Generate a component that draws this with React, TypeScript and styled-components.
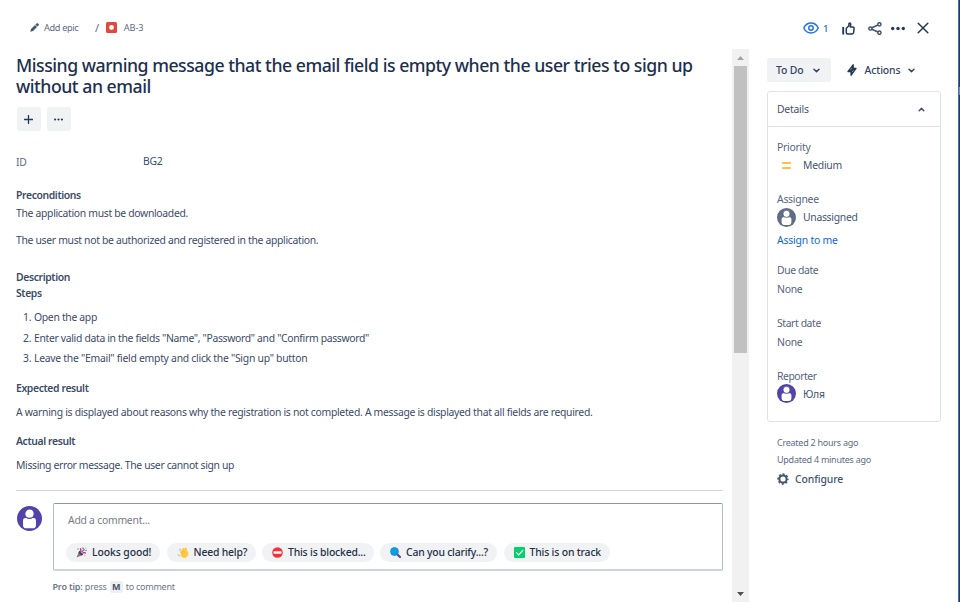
import React from 'react';
import styled, { createGlobalStyle } from 'styled-components';

const GlobalStyle = createGlobalStyle`
  * { box-sizing: border-box; }
  body { margin: 0; background: #fff; font: 10.4px "Noto Sans", "Open Sans", sans-serif; color: #3b4b68; overflow: hidden; }
  h1, p, ol, button { margin: 0; padding: 0; font: inherit; }
  svg { display: block; flex: none; }
`;

const Page = styled.div`
  display: grid;
  grid-template-columns: 749px 209px 2px;
  width: 960px;
  height: 602px;
  overflow: hidden;
`;
const Issue = styled.div`
  display: grid;
  grid-template-rows: 49px 553px;
`;
const Body = styled.div`
  display: grid;
  grid-template-columns: 732px 17px;
`;
const Edge = styled.div`
  display: flex;
  align-items: flex-start;
  padding-top: 87px;
  background: #0b3f86;
  border-left: 1px solid #4a6fa8;
`;
const EdgeMark = styled.i`
  width: 1px;
  height: 8px;
  background: #6d8fc0;
`;

const Text = styled.span<{ $size?: number; $weight?: number; $ls?: number; $color?: string }>`
  font-size: ${(p) => p.$size ?? 10.4}px;
  font-weight: ${(p) => p.$weight ?? 400};
  letter-spacing: ${(p) => p.$ls ?? -0.25}px;
  color: ${(p) => p.$color ?? 'inherit'};
  white-space: pre;
`;
const Copy = styled(Text)`
  letter-spacing: ${(p) => p.$ls ?? -0.32}px;
`;
const Strong = styled(Text)`
  font-weight: 600;
  letter-spacing: -0.38px;
`;

const Breadcrumbs = styled.nav`
  display: flex;
  align-items: center;
  height: 55px;
  padding-left: 30px;
  color: #5e6c84;
`;
const EpicLink = styled.span`
  display: flex;
  align-items: center;
  gap: 5px;
  width: 65px;
`;
const Key = styled.span`
  display: flex;
  align-items: center;
  gap: 7px;
  margin-left: 7px;
`;

const Content = styled.main`
  display: flex;
  flex-direction: column;
  padding: 6px 9px 0 16px;
`;
const Title = styled.h1`
  height: 42px;
  font-size: 17.7px;
  font-weight: 500;
  line-height: 21px;
  letter-spacing: -0.49px;
  white-space: pre;
  color: #1c3050;
`;
const Tools = styled.div`
  display: flex;
  gap: 6px;
  margin: 10px 0 0 0.5px;
`;
const ToolButton = styled.button`
  display: grid;
  place-items: center;
  width: 24px;
  height: 24px;
  border: 0;
  border-radius: 3px;
  background: #f1f2f4;
  color: #253858;
`;
const FieldRow = styled.div`
  display: flex;
  height: 16px;
  margin: 22px 0 18px;
  line-height: 16px;
`;
const FieldName = styled.div`
  width: 127px;
  padding-top: 1px;
`;
const Line = styled.p<{ $gap?: number }>`
  height: 16px;
  line-height: 16px;
  margin-top: ${(p) => p.$gap ?? 0}px;
  display: flex;
`;
const Steps = styled.ol`
  list-style: none;
  display: flex;
  flex-direction: column;
  gap: 4.7px;
  margin-top: 8px;
`;
const Step = styled.li`
  display: flex;
  height: 16px;
  line-height: 16px;
`;
const StepNumber = styled.span`
  width: 18px;
  padding-left: 7px;
`;
const Divider = styled.hr`
  width: 707px;
  height: 1px;
  margin: 17px 0 0;
  border: 0;
  background: #d3d6dd;
`;
const CommentRow = styled.section`
  display: flex;
  gap: 11px;
  margin: 12px 0 0 1px;
`;
const AvatarSlot = styled.div`
  padding-top: 3px;
`;
const CommentBox = styled.div`
  width: 670px;
  height: 68px;
  padding: 8px 12px;
  border: 1px solid #b3b9c7;
  border-top-color: #8c95a4;
  border-bottom: 2px solid #ced2dc;
  border-radius: 2px;
`;
const Placeholder = styled.div`
  height: 16px;
  padding-left: 2px;
  line-height: 16px;
  color: #757c88;
`;
const Chips = styled.div`
  display: flex;
  gap: 6.5px;
  margin-top: 15px;
`;
const Chip = styled.button<{ $w: number }>`
  display: flex;
  align-items: center;
  width: ${(p) => p.$w}px;
  height: 19px;
  padding-left: 10px;
  gap: 5px;
  border: 0;
  border-radius: 10px;
  background: #f1f2f4;
  color: #253048;
`;
const Tip = styled.footer`
  display: flex;
  align-items: center;
  height: 16px;
  margin: 8px 0 0 36.5px;
  color: #6b778c;
`;
const KeyCap = styled.kbd`
  display: grid;
  place-items: center;
  width: 13px;
  height: 12px;
  margin: 1px 3px 0;
  border-radius: 2px;
  background: #eeeff1;
  font-family: inherit;
  line-height: 12px;
`;

const Track = styled.div`
  display: flex;
  flex-direction: column;
  align-items: center;
  background: #f1f1f1;
`;
const Arrow = styled.div`
  display: grid;
  place-items: center;
  height: 17px;
  flex: none;
`;
const Thumb = styled.div`
  width: 13px;
  height: 287px;
  background: #c1c1c1;
`;
const Spacer = styled.div`
  flex: 1;
`;

const Side = styled.aside`
  display: flex;
  flex-direction: column;
  padding: 17px 17px 0 18px;
`;
const TopActions = styled.div`
  display: flex;
  align-items: center;
  height: 22px;
  padding-left: 36px;
  color: #253858;
`;
const Watch = styled.span`
  display: flex;
  align-items: center;
  gap: 4px;
  width: 39px;
  color: #2573de;
`;
const IconCell = styled.span<{ $w: number }>`
  display: flex;
  width: ${(p) => p.$w}px;
`;
const StatusRow = styled.div`
  display: flex;
  margin-top: 19px;
  height: 24px;
`;
const StatusButton = styled.button`
  display: flex;
  align-items: center;
  justify-content: space-between;
  width: 64px;
  padding: 0 11px 0 9px;
  border: 0;
  border-radius: 2px;
  background: #f1f2f4;
  color: #344563;
`;
const ActionsButton = styled(StatusButton)`
  width: 69px;
  margin-left: 16px;
  padding: 0 1px 0 0;
  background: none;
`;
const Panel = styled.section`
  width: 174px;
  height: 331px;
  margin-top: 9px;
  border: 1px solid #e0e2e7;
  border-radius: 3px;
`;
const PanelHead = styled.header`
  display: flex;
  align-items: center;
  justify-content: space-between;
  height: 35px;
  padding: 0 15px 0 9px;
  border-bottom: 1px solid #e0e2e7;
  color: #44546f;
`;
const Fields = styled.div`
  padding: 12px 0 0 9px;
`;
const Field = styled.div<{ $h: number; $gap?: number }>`
  display: flex;
  flex-direction: column;
  gap: ${(p) => p.$gap ?? 3}px;
  height: ${(p) => p.$h}px;
  line-height: 16px;
  color: #56647e;
`;
const Value = styled.div`
  display: flex;
  align-items: center;
  gap: 7px;
  height: 16px;
  color: #44546f;
`;
const Symbol = styled.span`
  display: grid;
  place-items: center;
  width: 19px;
  flex: none;
`;
const Meta = styled.div`
  display: flex;
  flex-direction: column;
  padding: 12px 0 0 10px;
  line-height: 17px;
  color: #5e6c84;
`;
const Configure = styled.div`
  display: flex;
  align-items: center;
  gap: 6px;
  height: 18px;
  margin-top: 2px;
  color: #44546f;
`;

const Avatar = ({ size, color }: { size: number; color: string }) => (
  <svg width={size} height={size} viewBox="0 0 24 24">
    <circle cx="12" cy="12" r="12" fill={color} />
    <path d="M8 11.600h8a2.200 2.200 0 0 1 2.200 2.200v4.600a3 3 0 0 1-3 3H8.800a3 3 0 0 1-3-3v-4.600A2.200 2.200 0 0 1 8 11.600z" fill="#fff" />
    <circle cx="12" cy="7.400" r="4.500" fill="#fff" stroke={color} strokeWidth="1.100" />
  </svg>
);
const Chevron = ({ up }: { up?: boolean }) => (
  <svg width="7" height="5" viewBox="0 0 7 5" fill="none" stroke="currentColor" strokeWidth="1.5" strokeLinecap="round" strokeLinejoin="round">
    <path d={up ? 'M1.200 3.700 3.500 1.400 5.800 3.700' : 'M1 1.200 3.500 3.600 6 1.200'} />
  </svg>
);
const Pencil = () => (
  <svg width="9" height="9" viewBox="0 0 9 9" fill="#44546f">
    <path d="M.3 8.700 1 6 5 2 7 4 3 8zM5.400 1.600 6.600.4a1 1 0 0 1 1.300 0l.7.7a1 1 0 0 1 0 1.300L7.400 3.600z" />
  </svg>
);
const Bug = () => (
  <svg width="11" height="11" viewBox="0 0 11 11">
    <rect width="11" height="11" rx="1.500" fill="#e5483a" />
    <circle cx="5.500" cy="5.500" r="2.400" fill="#fff" />
  </svg>
);
const Dots = ({ w, r }: { w: number; r: number }) => (
  <svg width={w} height="5" viewBox={`0 0 ${w} 5`} fill="currentColor">
    <circle cx={r} cy="2.500" r={r} />
    <circle cx={w / 2} cy="2.500" r={r} />
    <circle cx={w - r} cy="2.500" r={r} />
  </svg>
);
const Eye = () => (
  <svg width="16" height="12" viewBox="0 0 16 12" fill="none" stroke="currentColor" strokeWidth="1.500">
    <path d="M.8 6C2.300 2.800 4.800 1 8 1s5.700 1.800 7.200 5C13.700 9.200 11.200 11 8 11S2.300 9.200.8 6z" />
    <circle cx="8" cy="6" r="2.200" />
  </svg>
);
const Thumbs = () => (
  <svg width="13" height="13" viewBox="0 0 13 13" fill="none" stroke="currentColor" strokeWidth="1.500" strokeLinejoin="round">
    <path d="M4.300 6.300 6.900 3.700V1.800C6.900.9 8.700.6 8.700 2.300c0 1.200-.4 2.300-.4 2.800h2.600c.9 0 1.300.6 1.200 1.400l-.5 4c-.1.8-.6 1.400-1.400 1.400H5.800c-1 0-1.500-.6-1.500-1.500z" />
    <path d="M1.200 5.800v6" strokeWidth="1.900" strokeLinecap="round" />
  </svg>
);
const Share = () => (
  <svg width="14" height="13" viewBox="0 0 14 13" fill="none" stroke="#44546f" strokeWidth="1.500">
    <circle cx="2.400" cy="6.500" r="1.600" />
    <circle cx="11.400" cy="2.300" r="1.600" />
    <circle cx="11.400" cy="10.700" r="1.600" />
    <path d="M3.900 5.800 9.900 3M3.900 7.200l6 2.800" />
  </svg>
);
const Close = () => (
  <svg width="12" height="12" viewBox="0 0 12 12" fill="none" stroke="currentColor" strokeWidth="1.500" strokeLinecap="round">
    <path d="M1.200 1.200 10.800 10.800M10.800 1.200 1.200 10.800" />
  </svg>
);
const Bolt = () => (
  <svg width="10" height="12" viewBox="0 0 10 12">
    <path d="M6.200.7v3.700h2.900L4 11.300V7.600H.9z" fill="#253858" stroke="#253858" strokeWidth="1.200" strokeLinejoin="round" />
    <path d="M4.700 4.300 3.600 5.700M6.400 6.300 5.300 7.700" stroke="#fff" strokeWidth=".6" />
  </svg>
);
const Plus = () => (
  <svg width="9" height="9" viewBox="0 0 9 9" stroke="currentColor" strokeWidth="1.300" strokeLinecap="round">
    <path d="M4.500.5v8M.5 4.500h8" />
  </svg>
);
const Gear = () => (
  <svg width="12" height="12" viewBox="0 0 12 12" fill="none" stroke="#44546f">
    <circle cx="6" cy="6" r="3.600" strokeWidth="2" />
    <circle cx="6" cy="6" r="4.900" strokeWidth="1.500" strokeDasharray="2.200 1.648" strokeDashoffset="1.1" />
  </svg>
);

const Party = () => (
  <svg width="11" height="11" viewBox="0 0 11 11">
    <path d="M.6 10.500 3.300 3.800 7.200 7.800z" fill="#8f7462" />
    <path d="m3.300 3.800 3.900 4-1.700.8L2.500 5.700z" fill="#4a4050" />
    <path d="M4.200 4.700C5.400 3.900 5 2.500 4.200 1.400M6.300 6.500c1-1 2.500-.9 3.600-.2" stroke="#d81b72" strokeWidth="1.300" fill="none" />
    <path d="M5.400 5.200 8.600 2.200" stroke="#00a4dc" strokeWidth="1.300" />
    <circle cx="7" cy="1.200" r=".8" fill="#d81b72" />
    <circle cx="10" cy="3.500" r=".8" fill="#ee4f91" />
    <circle cx="2" cy="2" r=".7" fill="#3b92d1" />
    <circle cx="9.700" cy="1" r=".6" fill="#8fc6ee" />
    <circle cx="8.700" cy="8.800" r=".7" fill="#ffa4bd" />
  </svg>
);
const Wave = () => (
  <svg width="12" height="11" viewBox="0 0 12 11">
    <path d="M3.200 4.600 5 3.200 6 1.300l1.300.9L8.500.7l1.100 1.100.1 2 1.300 1.700-.3 3.300-2 1.600-2.600.2-2.700-2.300 1-.9z" fill="#ffc83d" stroke="#ffc83d" strokeWidth=".7" strokeLinejoin="round" />
    <path d="m4.800 5.300 1.800 1.900M6.200 3.900l1.600 1.700" stroke="#e6a400" strokeWidth=".5" />
    <path d="M2.200 3.600c.3-.9.900-1.500 1.700-1.900M1 7.200c.2 1 .8 1.700 1.800 2" stroke="#a3c9ee" strokeWidth="1.200" fill="none" />
  </svg>
);
const Blocked = () => (
  <svg width="11" height="11" viewBox="0 0 11 11">
    <circle cx="5.500" cy="5.500" r="5.300" fill="#f92f36" />
    <rect x="1.500" y="4.300" width="8" height="2.400" rx=".5" fill="#fff" />
  </svg>
);
const Magnifier = () => (
  <svg width="11" height="11" viewBox="0 0 11 11">
    <path d="m7 7 3 3" stroke="#654a88" strokeWidth="2.200" strokeLinecap="round" />
    <circle cx="4.500" cy="4.500" r="3.900" fill="#00a6ed" stroke="#3a76b8" strokeWidth=".9" />
  </svg>
);
const Check = () => (
  <svg width="11" height="11" viewBox="0 0 11 11">
    <rect width="11" height="11" rx="1" fill="#00d26a" />
    <path d="m2.500 5.600 2.200 2.200 4-4.300" fill="none" stroke="#fff" strokeWidth="1.200" strokeLinecap="round" />
  </svg>
);

const chips = [
  { label: 'Looks good!', icon: <Party />, width: 94, ls: -0.08 },
  { label: 'Need help?', icon: <Wave />, width: 89, ls: -0.18 },
  { label: 'This is blocked...', icon: <Blocked />, width: 111.5, ls: -0.18 },
  { label: 'Can you clarify...?', icon: <Magnifier />, width: 117, ls: -0.2 },
  { label: 'This is on track', icon: <Check />, width: 106, ls: -0.16 },
];
const steps = [
  { text: 'Open the app', ls: -0.32 },
  { text: 'Enter valid data in the fields "Name", "Password" and "Confirm password"', ls: -0.33 },
  { text: 'Leave the "Email" field empty and click the "Sign up" button', ls: -0.27 },
];

export default function App() {
  return (
    <>
      <GlobalStyle />
      <Page>
        <Issue>
          <Breadcrumbs>
            <EpicLink><Pencil /><Text $size={9.2} $ls={-0.35}>Add epic</Text></EpicLink>
            <Text $size={11}>/</Text>
            <Key><Bug /><Text $size={9.2} $ls={-0.15}>AB-3</Text></Key>
          </Breadcrumbs>
          <Body>
            <Content>
              <Title>{'Missing warning message that the email field is empty when the user tries to sign up\nwithout an email'}</Title>
              <Tools>
                <ToolButton aria-label="Add"><Plus /></ToolButton>
                <ToolButton aria-label="More"><Dots w={9} r={1.1} /></ToolButton>
              </Tools>
              <FieldRow>
                <FieldName><Text $color="#5e6c84">ID</Text></FieldName>
                <Text>BG2</Text>
              </FieldRow>
              <Line><Strong>Preconditions</Strong></Line>
              <Line $gap={2}><Copy>The application must be downloaded.</Copy></Line>
              <Line $gap={11}><Copy>The user must not be authorized and registered in the application.</Copy></Line>
              <Line $gap={21}><Strong>Description</Strong></Line>
              <Line><Strong>Steps</Strong></Line>
              <Steps>
                {steps.map((s, i) => (
                  <Step key={s.text}><StepNumber><Text>{i + 1}.</Text></StepNumber><Copy $ls={s.ls}>{s.text}</Copy></Step>
                ))}
              </Steps>
              <Line $gap={13.6}><Strong>Expected result</Strong></Line>
              <Line $gap={8}><Copy $ls={-0.305}>A warning is displayed about reasons why the registration is not completed. A message is displayed that all fields are required.</Copy></Line>
              <Line $gap={13}><Strong>Actual result</Strong></Line>
              <Line $gap={8}><Copy $ls={-0.35}>Missing error message. The user cannot sign up</Copy></Line>
              <Divider />
              <CommentRow>
                <AvatarSlot><Avatar size={25} color="#5243aa" /></AvatarSlot>
                <CommentBox>
                  <Placeholder><Text>Add a comment...</Text></Placeholder>
                  <Chips>
                    {chips.map((c) => (
                      <Chip key={c.label} $w={c.width}>{c.icon}<Text $weight={500} $ls={c.ls}>{c.label}</Text></Chip>
                    ))}
                  </Chips>
                </CommentBox>
              </CommentRow>
              <Tip>
                <Text $size={9} $weight={600} $ls={-0.17}>Pro tip: </Text>
                <Text $size={9} $ls={-0.17}>press</Text>
                <KeyCap><Text $size={9} $weight={700} $color="#44546f">M</Text></KeyCap>
                <Text $size={9}>to comment</Text>
              </Tip>
            </Content>
            <Track>
              <Arrow><svg width="7" height="4" viewBox="0 0 7 4"><path d="M0 4 3.500 0 7 4z" fill="#a3a3a3" /></svg></Arrow>
              <Thumb />
              <Spacer />
              <Arrow><svg width="7" height="4" viewBox="0 0 7 4"><path d="M0 0 3.500 4 7 0z" fill="#505050" /></svg></Arrow>
            </Track>
          </Body>
        </Issue>
        <Side>
          <TopActions>
            <Watch><Eye /><Text $size={9.5} $weight={500}>1</Text></Watch>
            <IconCell $w={26}><Thumbs /></IconCell>
            <IconCell $w={23}><Share /></IconCell>
            <IconCell $w={26}><Dots w={14} r={1.7} /></IconCell>
            <Close />
          </TopActions>
          <StatusRow>
            <StatusButton><Text $weight={500} $ls={-0.1}>To Do</Text><Chevron /></StatusButton>
            <ActionsButton><Bolt /><Text $weight={500} $ls={-0.1}>Actions</Text><Chevron /></ActionsButton>
          </StatusRow>
          <Panel>
            <PanelHead><Text>Details</Text><Chevron up /></PanelHead>
            <Fields>
              <Field $h={52.4} $gap={2}>
                <Text>Priority</Text>
                <Value>
                  <Symbol><svg width="9" height="7" viewBox="0 0 9 7" stroke="#ffab00" strokeWidth="1.400" strokeLinecap="round"><path d="M.7 1h7.600M.7 6h7.600" /></svg></Symbol>
                  <Text>Medium</Text>
                </Value>
              </Field>
              <Field $h={70.6} $gap={2}>
                <Text>Assignee</Text>
                <Value><Symbol><Avatar size={19} color="#5e6c84" /></Symbol><Text $ls={-0.3}>Unassigned</Text></Value>
                <Line $gap={5}><Text $color="#0c66e4" $ls={-0.2}>Assign to me</Text></Line>
              </Field>
              <Field $h={53}><Text $ls={-0.4}>Due date</Text><Text>None</Text></Field>
              <Field $h={53}><Text $ls={-0.4}>Start date</Text><Text>None</Text></Field>
              <Field $h={40} $gap={2}>
                <Text $ls={-0.45}>Reporter</Text>
                <Value><Symbol><Avatar size={19} color="#5243aa" /></Symbol><Text>Юля</Text></Value>
              </Field>
            </Fields>
          </Panel>
          <Meta>
            <Text $size={9}>Created 2 hours ago</Text>
            <Text $size={9}>Updated 4 minutes ago</Text>
            <Configure><Gear /><Text $weight={500} $ls={-0.1}>Configure</Text></Configure>
          </Meta>
        </Side>
        <Edge><EdgeMark /></Edge>
      </Page>
    </>
  );
}
